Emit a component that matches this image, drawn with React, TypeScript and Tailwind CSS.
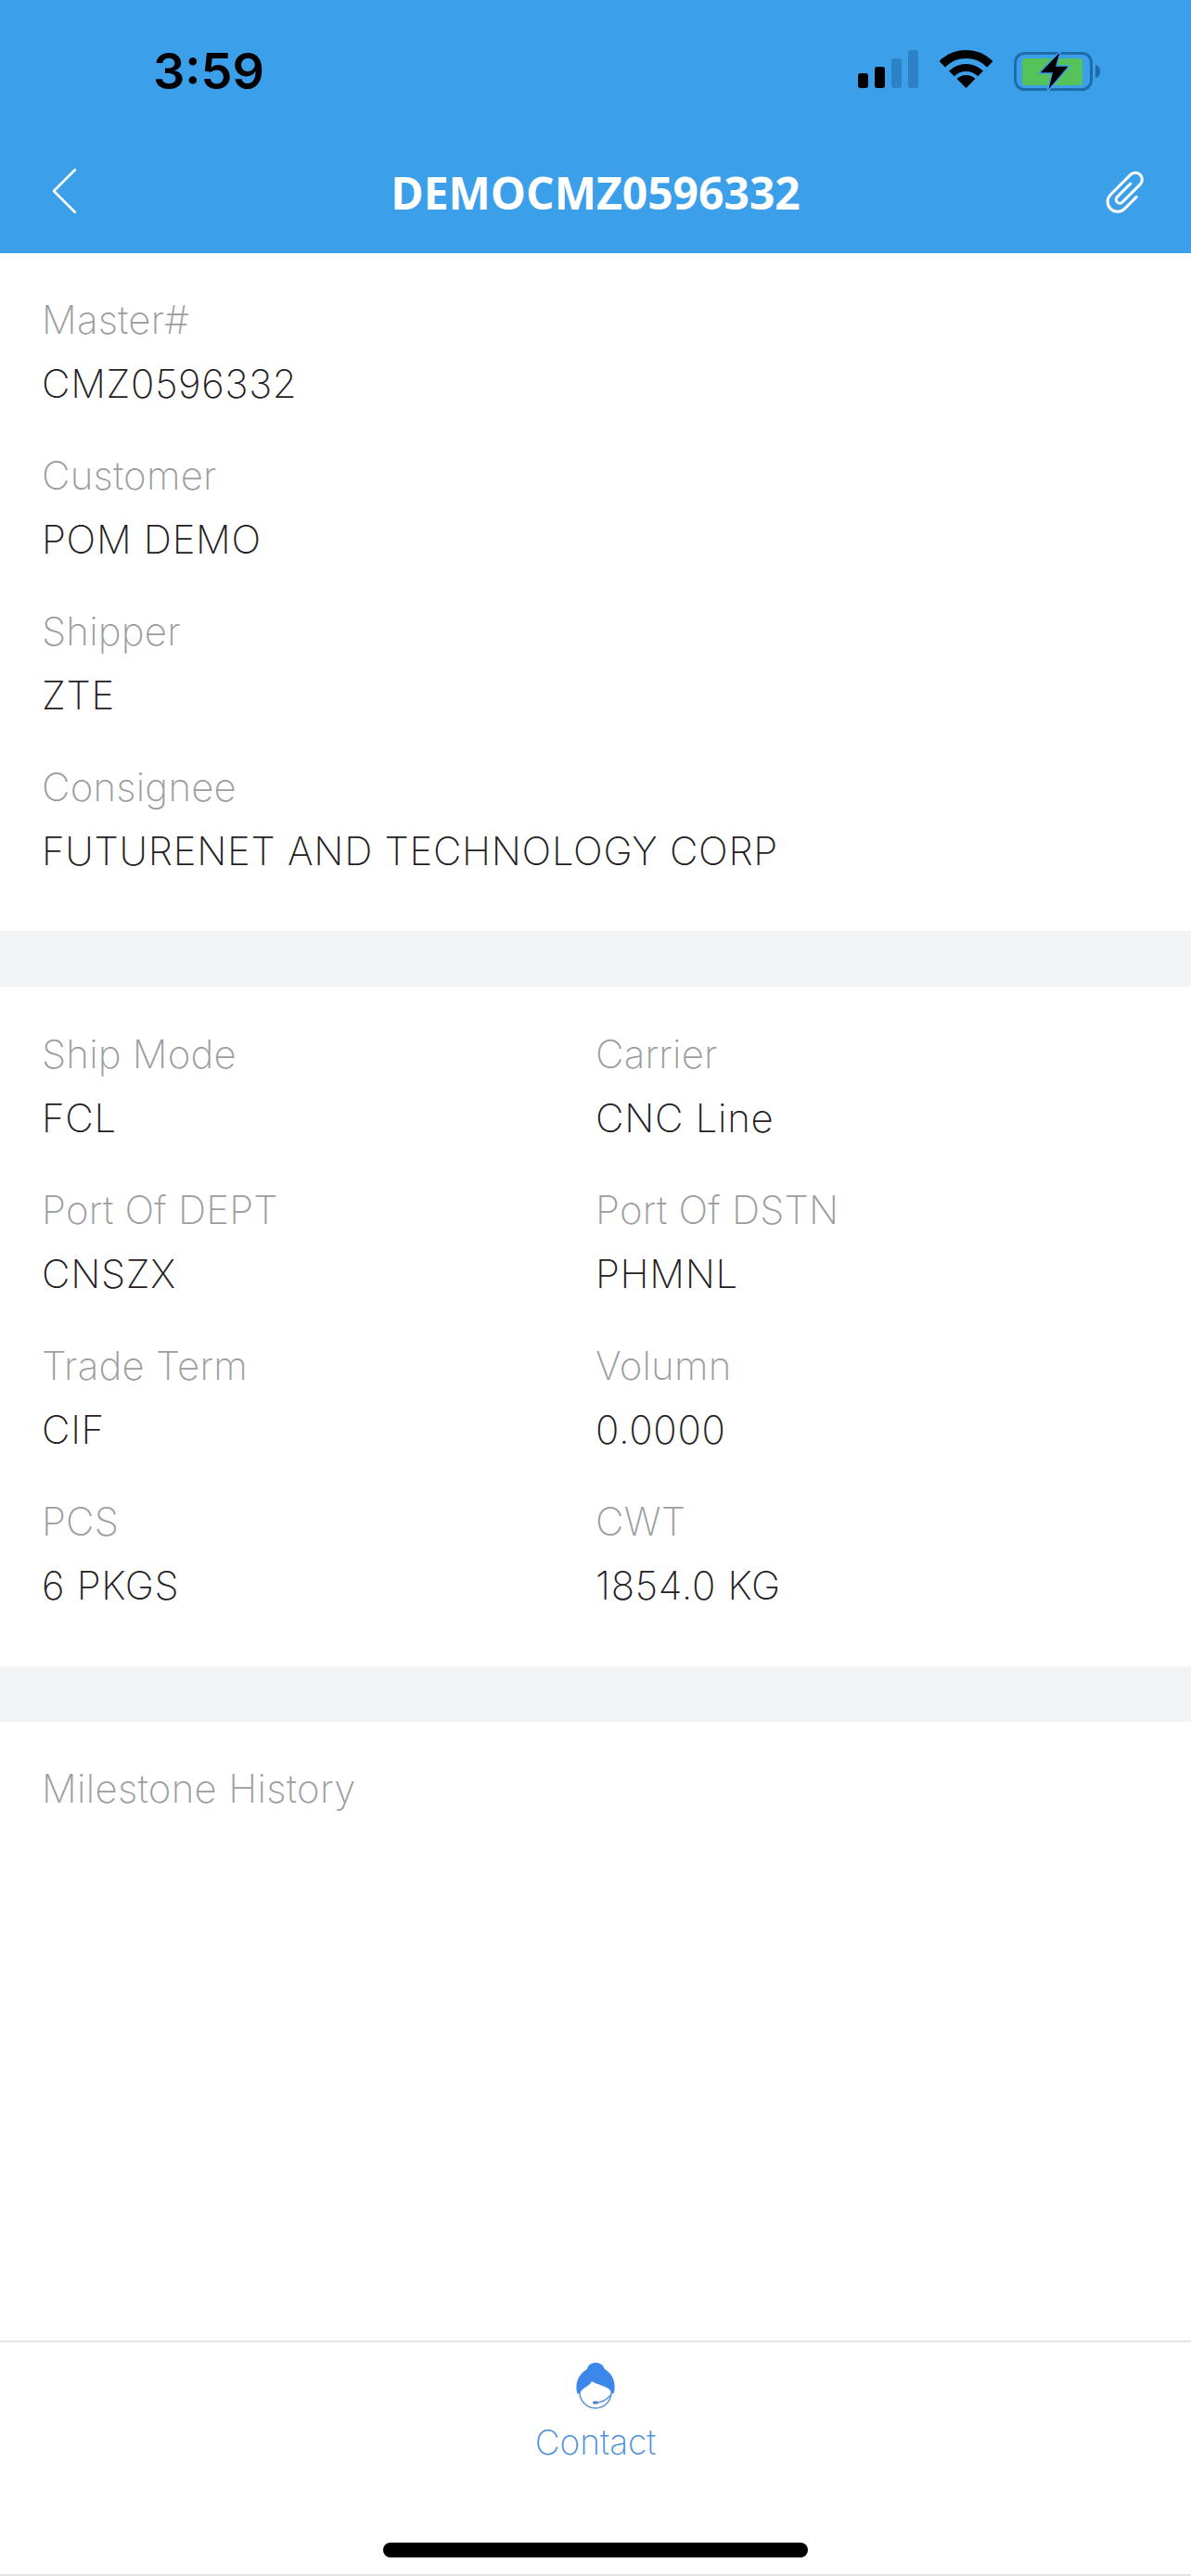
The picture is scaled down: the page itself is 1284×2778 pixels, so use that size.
import React from "react";

const topFields = [
  { label: "Master#", value: "CMZ0596332" },
  { label: "Customer", value: "POM DEMO" },
  { label: "Shipper", value: "ZTE" },
  { label: "Consignee", value: "FUTURENET AND TECHNOLOGY CORP" },
];

const shipFields = [
  { label: "Ship Mode", value: "FCL" },
  { label: "Carrier", value: "CNC Line" },
  { label: "Port Of DEPT", value: "CNSZX" },
  { label: "Port Of DSTN", value: "PHMNL" },
  { label: "Trade Term", value: "CIF" },
  { label: "Volumn", value: "0.0000" },
  { label: "PCS", value: "6 PKGS" },
  { label: "CWT", value: "1854.0 KG" },
];

function Field({ label, value }: { label: string; value: string }) {
  return (
    <div>
      <div className="h-[69px] text-[42px] leading-[68px] font-extralight tracking-[0.2px] text-[#9b9da0]">{label}</div>
      <div className="h-[68px] text-[42px] leading-[68px] font-extralight tracking-[0.7px] text-[#1f2022] whitespace-nowrap">{value}</div>
    </div>
  );
}

function SignalIcon() {
  return (
    <svg width="65" height="42" viewBox="0 0 65 42">
      <rect x="0" y="25" width="11" height="16" rx="3" fill="#000" />
      <rect x="18" y="18" width="11" height="23" rx="3" fill="#000" />
      <rect x="36" y="9" width="11" height="32" rx="3" fill="#2b83c6" />
      <rect x="54" y="0" width="11" height="41" rx="3" fill="#2b83c6" />
    </svg>
  );
}

function WifiIcon() {
  return (
    <svg width="57" height="42" viewBox="0 0 57 42" fill="none">
      <path d="M2.7 15.2A36.5 36.5 0 0 1 54.3 15.2" stroke="#000" strokeWidth="9" />
      <path d="M12.9 25.4A22 22 0 0 1 44.1 25.4" stroke="#000" strokeWidth="8" />
      <path d="M28.5 41L18.6 31A14 14 0 0 1 38.4 31Z" fill="#000" />
    </svg>
  );
}

function BatteryIcon() {
  return (
    <svg width="94" height="46" viewBox="0 0 94 46" fill="none">
      <rect x="1.5" y="3.5" width="82" height="39" rx="10" stroke="#1f6da8" strokeWidth="3" />
      <rect x="9" y="9" width="65" height="29" rx="3" fill="#55c35a" />
      <path d="M88 16C92 17 93 20 93 23C93 26 92 29 88 30Z" fill="#1f6da8" />
      <path d="M51 0L27 25H41L36 45L60 17H46Z" fill="#000" stroke="#3c9fea" strokeWidth="1.5" />
    </svg>
  );
}

function ClipIcon() {
  return (
    <svg width="50" height="52" viewBox="0 0 44 46" fill="none">
      <g transform="rotate(45 22 23)">
        <path
          d="M33 20V36A9.5 9.5 0 0 1 14 36V9A6.5 6.5 0 0 1 27 9V33A3.5 3.5 0 0 1 20 33V15"
          stroke="#fff"
          strokeWidth="2.7"
          strokeLinecap="round"
        />
      </g>
    </svg>
  );
}

function AgentIcon() {
  return (
    <svg width="44" height="50" viewBox="0 0 44 50" fill="none">
      <path d="M5 32A17 17 0 0 0 39 32" stroke="#5b93d8" strokeWidth="1.5" />
      <path
        d="M2 32C-1 17 8 10 13 7C14 2 18 0 22 0C27 0 30 2 32 7C37 10 45 17 42 32C41 34 39 34 38.5 31C36 25 26 25 18 20C16 25 9 26 5.5 32C5 34 3 34 2 32Z"
        fill="#3d87ea"
      />
      <path d="M22 43Q32 43 38 35" stroke="#5b93d8" strokeWidth="1.3" />
      <rect x="19" y="41.5" width="6" height="3" rx="1.5" fill="#4a7fc0" />
    </svg>
  );
}

export default function App() {
  return (
    <div className="w-[1284px] h-[2778px] flex flex-col bg-white overflow-hidden font-['Inter',sans-serif]">
      {/* Header */}
      <div className="h-[273px] bg-[#3c9fea] shrink-0">
        <div className="h-[149px] flex justify-between items-start pt-[54px] pl-[165px] pr-[97px]">
          <span className="text-[54px] leading-[46px] font-semibold text-black">3:59</span>
          <div className="flex items-start gap-[23px]">
            <SignalIcon />
            <WifiIcon />
            <BatteryIcon />
          </div>
        </div>
        <div className="h-[117px] flex items-center justify-between pl-[56px] pr-[45px]">
          <div className="w-[39px] mb-[4px]">
            <svg width="26" height="48" viewBox="0 0 26 48" fill="none">
              <path d="M25 1L2 24L25 47" stroke="#fff" strokeWidth="2.6" strokeLinecap="round" strokeLinejoin="round" />
            </svg>
          </div>
          <span className="text-[48px] leading-none font-bold text-white font-['Open_Sans',sans-serif]">DEMOCMZ0596332</span>
          <div className="mb-[4px]">
            <ClipIcon />
          </div>
        </div>
      </div>

      {/* Parties */}
      <div className="flex flex-col gap-[31px] pt-[38px] pb-[52px] pl-[45px] shrink-0">
        {topFields.map((f) => (
          <Field key={f.label} label={f.label} value={f.value} />
        ))}
      </div>

      <div className="h-[60px] bg-[#f2f3f5] shrink-0" />

      {/* Shipment */}
      <div className="grid grid-cols-[597px_1fr] gap-y-[31px] pt-[39px] pb-[53px] pl-[45px] shrink-0">
        {shipFields.map((f) => (
          <Field key={f.label} label={f.label} value={f.value} />
        ))}
      </div>

      <div className="h-[60px] bg-[#f2f3f5] shrink-0" />

      {/* Milestones */}
      <div className="flex-1 pt-[38px] pl-[45px]">
        <div className="text-[42px] leading-[68px] font-extralight tracking-[0.3px] text-[#9b9da0]">Milestone History</div>
      </div>

      {/* Bottom bar */}
      <div className="h-[254px] shrink-0 border-t-2 border-b-2 border-[#e2e3e5] flex flex-col items-center pt-[22px]">
        <AgentIcon />
        <div className="mt-[16px] text-[37px] leading-[40px] font-extralight text-[#4a8fdc]">Contact</div>
        <div className="mt-[88px] w-[458px] h-[16px] rounded-full bg-black" />
      </div>
    </div>
  );
}
